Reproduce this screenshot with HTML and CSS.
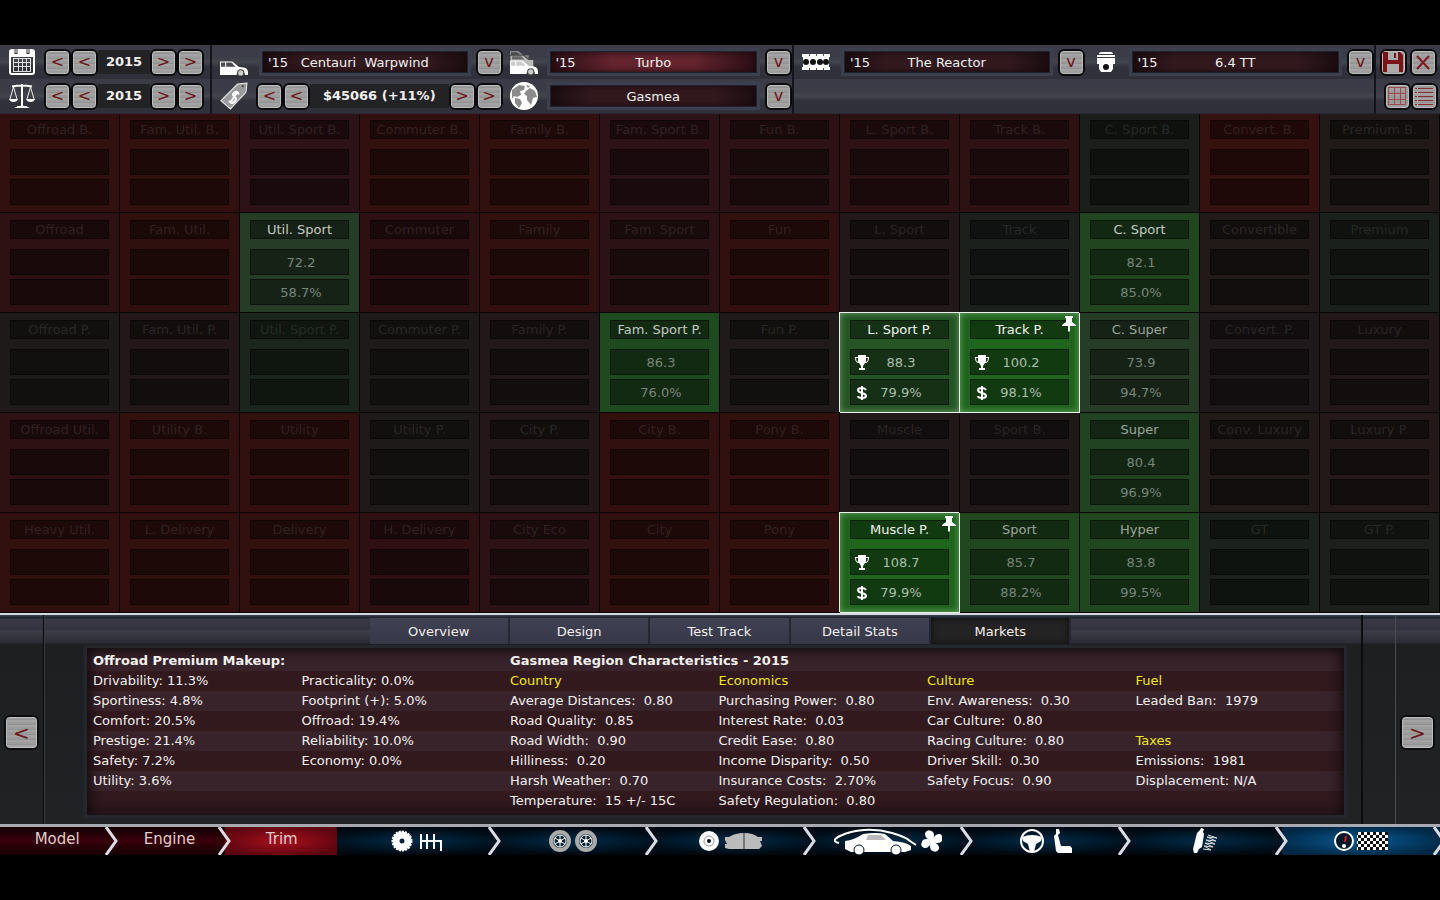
FILE: index.html
```html
<!DOCTYPE html>
<html lang="en">
<head>
    <meta charset="UTF-8">
    <meta name="viewport" content="width=device-width, initial-scale=1.0">
    <title>Markets</title>
    <link rel="stylesheet" href="styles.css">
</head>
<body>

<header class="topbar">
    <div class="section dates">
        <div class="row">
            <svg class="icon" viewBox="0 0 26 26"><rect x="1" y="1" width="24" height="24" rx="2" fill="none" stroke="#fff" stroke-width="2"/><path d="M1 2h24v6H1z" fill="#fff"/><path d="M7 0v5M19 0v5" stroke="#33343c" stroke-width="3"/><path d="M7 0v4M19 0v4" stroke="#fff"/><path d="M4 9.500h18M4 13.500h18M4 17.500h18M4 22.500h18M4.500 9v14M9.500 9v14M13.500 9v14M17.500 9v14M21.500 9v14" stroke="#ddd" stroke-width="1"/></svg>
            <button class="metal">&lt;</button><button class="metal">&lt;</button>
            <b class="value">2015</b>
            <button class="metal">&gt;</button><button class="metal">&gt;</button>
        </div>
        <div class="row">
            <svg class="icon" viewBox="0 0 26 26"><path d="M13 1v22M3 3.500q10-2 20 0M8 24h10" fill="none" stroke="#fff" stroke-width="2"/><path d="M4.500 4L1 16M4.500 4L8 16M21.500 4L18 16M21.500 4L25 16" fill="none" stroke="#eee"/><path d="M0 16h9q-1 3-4.500 3T0 16zM17 16h9q-1 3-4.500 3T17 16zM5 25q8-5 16 0z" fill="#fff"/></svg>
            <button class="metal">&lt;</button><button class="metal">&lt;</button>
            <b class="value">2015</b>
            <button class="metal">&gt;</button><button class="metal">&gt;</button>
        </div>
    </div>

    <div class="section">
        <div class="row">
            <div class="unit">
                <svg class="icon" viewBox="0 0 27 27"><path d="M0 13h12l6 5 6 1q3 1 3 5v2h-3a4 4 0 0 0-8 0H0z" fill="#fff"/><path d="M1 14h4v4H1zM6 14h5l4 4H6z" fill="#4a4b53"/><circle cx="20" cy="24" r="3" fill="#ccc" stroke="#444"/></svg>
                <div class="field"><span>'15</span><select aria-label="Model"><option>Centauri&nbsp; Warpwind</option></select></div>
                <button class="metal">v</button>
            </div>
            <div class="unit">
                <svg class="icon" viewBox="0 0 27 27"><path d="M0 3h8l5 4h5v13H0z" fill="#888"/><path d="M1 4h6l3 3H1z" fill="#4a4b53"/><path d="M0 7h13l5 4h5v12H0z" fill="#bbb" stroke="#444"/><path d="M2 8h9l3 3H2z" fill="#666"/><path d="M0 12h12l6 5 6 1q3 1 3 5v2h-3a4 4 0 0 0-8 0H0z" fill="#fff"/><path d="M1 13h4v4H1zM6 13h5l4 4H6z" fill="#ccc"/><circle cx="20" cy="23" r="3" fill="#ccc" stroke="#444"/></svg>
                <div class="field active"><span>'15</span><select aria-label="Trim"><option>Turbo</option></select></div>
                <button class="metal">v</button>
            </div>
        </div>
        <div class="row">
            <div class="unit price">
                <svg class="icon" viewBox="0 0 27 27"><path d="M1 18L17 2l9-1-1 9L10 26z" fill="#9a9a9c" stroke="#eee"/><circle cx="22" cy="4" r="1" fill="#444"/><path d="M18 12q-1-4-4-2t0 4 0 5-5-1M17 9l-7 11" fill="none" stroke="#fff" stroke-width="2"/></svg>
                <button class="metal">&lt;</button><button class="metal">&lt;</button>
                <b class="value">$45066 (+11%)</b>
                <button class="metal">&gt;</button><button class="metal">&gt;</button>
            </div>
            <div class="unit">
                <svg class="icon" viewBox="0 0 28 28"><circle cx="14" cy="14" r="14" fill="#fff"/><path d="M2 8l7-5 6 1-1 4-4 1 1 4-4 2-3-1-2 3zM5 16l5 1 2 4-3 5-4-5zM16 9l4-3 5 3 2 6-4 1-2 7-4-5v-4l-3-2zM16 3l4 1-2 2z" fill="#8b8b8b"/></svg>
                <div class="field"><select aria-label="Region"><option>Gasmea</option></select></div>
                <button class="metal">v</button>
            </div>
        </div>
    </div>

    <div class="section">
        <div class="row">
            <div class="unit">
                <svg class="icon" viewBox="0 0 28 28"><path d="M1 6h26v16H1z" fill="#fff"/><path d="M0 6h3v3H0zM25 6h3v3h-3zM0 19h3v3H0zM25 19h3v3h-3z" fill="#fff"/><g fill="#111"><circle cx="4" cy="14" r="3"/><circle cx="11" cy="14" r="3"/><circle cx="18" cy="14" r="3"/><circle cx="24" cy="14" r="3"/></g><g fill="#555"><path d="M7 6h1v2H7zM14 6h1v2h-1zM21 6h1v2h-1zM7 20h1v2H7zM14 20h1v2h-1zM21 20h1v2h-1z"/></g></svg>
                <div class="field"><span>'15</span><select aria-label="Engine family"><option>The Reactor</option></select></div>
                <button class="metal">v</button>
            </div>
            <div class="unit">
                <svg class="icon" viewBox="0 0 28 28"><path d="M7 5l2-1h10l2 1v1H7zM5 7h18v2H5zM5 10h18v6h-2v5l-2 3H9l-2-3v-5H5z" fill="#fff"/><circle cx="14" cy="19" r="3" fill="#111"/></svg>
                <div class="field"><span>'15</span><select aria-label="Engine variant"><option>6.4 TT</option></select></div>
                <button class="metal">v</button>
            </div>
        </div>
        <div class="row"></div>
    </div>

    <div class="section tools">
        <div class="row">
            <button class="metal" aria-label="Save"><svg viewBox="0 0 22 22"><path d="M1 1h17l3 3v17H1z" fill="#7c1117"/><path d="M6 1h10v8H6zM5 13h12v8H5z" fill="#aaa"/><path d="M12 2h2v5h-2z" fill="#7c1117"/></svg></button>
            <button class="metal" aria-label="Close"><svg viewBox="0 0 22 22"><path d="M5 5l12 13M17 5L5 18" stroke="#7c1b22" stroke-width="2"/></svg></button>
        </div>
        <div class="row">
            <button class="metal" aria-label="Grid view"><svg viewBox="0 0 22 22"><path d="M2 2.500h18M2 8.500h18M2 14.500h18M2 19.500h18M2.500 2v18M8.500 2v18M14.500 2v18M19.500 2v18" stroke="#9c4a50"/></svg></button>
            <button class="metal" aria-label="List view"><svg viewBox="0 0 22 22"><path d="M2 3.500h18M2 7.500h18M2 11.500h18M2 15.500h18M2 19.500h18" stroke="#8d2a32"/><path d="M4.500 2v19" stroke="#aaa"/></svg></button>
        </div>
    </div>
</header>

<main class="markets" id="markets"></main>

<section class="panel">
    <div class="side"><button class="metal big" aria-label="Previous">&lt;</button></div>
    <div class="center">
        <nav class="tabs">
            <button>Overview</button>
            <button>Design</button>
            <button>Test Track</button>
            <button>Detail Stats</button>
            <button class="current">Markets</button>
        </nav>
        <div class="screen">
            <h2 class="makeup">Offroad Premium Makeup:</h2>
            <h2 class="region">Gasmea Region Characteristics - 2015</h2>
            <ul>
                <li>Drivability: 11.3%</li>
                <li>Sportiness: 4.8%</li>
                <li>Comfort: 20.5%</li>
                <li>Prestige: 21.4%</li>
                <li>Safety: 7.2%</li>
                <li>Utility: 3.6%</li>
            </ul>
            <ul>
                <li>Practicality: 0.0%</li>
                <li>Footprint (+): 5.0%</li>
                <li>Offroad: 19.4%</li>
                <li>Reliability: 10.0%</li>
                <li>Economy: 0.0%</li>
            </ul>
            <ul>
                <li class="title">Country</li>
                <li>Average Distances:&nbsp; 0.80</li>
                <li>Road Quality:&nbsp; 0.85</li>
                <li>Road Width:&nbsp; 0.90</li>
                <li>Hilliness:&nbsp; 0.20</li>
                <li>Harsh Weather:&nbsp; 0.70</li>
                <li>Temperature:&nbsp; 15 +/- 15C</li>
            </ul>
            <ul>
                <li class="title">Economics</li>
                <li>Purchasing Power:&nbsp; 0.80</li>
                <li>Interest Rate:&nbsp; 0.03</li>
                <li>Credit Ease:&nbsp; 0.80</li>
                <li>Income Disparity:&nbsp; 0.50</li>
                <li>Insurance Costs:&nbsp; 2.70%</li>
                <li>Safety Regulation:&nbsp; 0.80</li>
            </ul>
            <ul>
                <li class="title">Culture</li>
                <li>Env. Awareness:&nbsp; 0.30</li>
                <li>Car Culture:&nbsp; 0.80</li>
                <li>Racing Culture:&nbsp; 0.80</li>
                <li>Driver Skill:&nbsp; 0.30</li>
                <li>Safety Focus:&nbsp; 0.90</li>
            </ul>
            <ul>
                <li class="title">Fuel</li>
                <li>Leaded Ban:&nbsp; 1979</li>
                <li></li>
                <li class="title">Taxes</li>
                <li>Emissions:&nbsp; 1981</li>
                <li>Displacement: N/A</li>
            </ul>
        </div>
    </div>
    <div class="strip"></div>
    <div class="side"><button class="metal big" aria-label="Next">&gt;</button></div>
</section>

<nav class="steps">
    <button class="red">Model<svg class="chevron" viewBox="0 0 14 28"><use href="#chev"/></svg></button>
    <button class="red">Engine<svg class="chevron" viewBox="0 0 14 28"><use href="#chev"/></svg></button>
    <button class="red now">Trim</button>
    <button aria-label="Drivetrain">
        <svg width="52" height="26" viewBox="0 0 52 26"><circle cx="12" cy="13" r="6" fill="none" stroke="#fff" stroke-width="7"/><circle cx="12" cy="13" r="9" fill="none" stroke="#fff" stroke-width="3" stroke-dasharray="2 1"/><path d="M31 6v15M37 6v15M44 6v15M31 13h20v10" fill="none" stroke="#fff" stroke-width="2"/></svg>
        <svg class="chevron" viewBox="0 0 14 28"><use href="#chev"/></svg>
    </button>
    <button aria-label="Wheels">
        <svg width="50" height="26" viewBox="0 0 50 26"><g id="wheel"><circle cx="12" cy="13" r="9" fill="#0a2638" stroke="#aaa" stroke-width="4"/><circle cx="12" cy="13" r="6" fill="none" stroke="#fff"/><path d="M12 7v12M7 10l10 6M17 10L7 16" stroke="#fff"/><circle cx="12" cy="13" r="2" fill="#fff"/></g><use href="#wheel" x="26"/></svg>
        <svg class="chevron" viewBox="0 0 14 28"><use href="#chev"/></svg>
    </button>
    <button aria-label="Brakes">
        <svg width="64" height="26" viewBox="0 0 64 26"><circle cx="10" cy="13" r="10" fill="#fff"/><circle cx="10" cy="13" r="5" fill="none" stroke="#999"/><circle cx="10" cy="13" r="2" fill="#012"/><path d="M26 9h4q6-4 15-4t14 4h4v4h-2l2 5-3 3H30l-4-1v-4h2l-2-4z" fill="#bbb"/><path d="M45 5v16" stroke="#333"/></svg>
        <svg class="chevron" viewBox="0 0 14 28"><use href="#chev"/></svg>
    </button>
    <button aria-label="Aerodynamics">
        <svg width="108" height="28" viewBox="0 0 108 28"><path d="M5 16Q-4 14 6 9T30 3t28 3 18 8l6 4" fill="none" stroke="#fff" stroke-width="2"/><path d="M11 14q9-1 18-7 13-2 22 0l8 7q13 1 18 5v4l-6 2H17l-6-3z" fill="#fff"/><path d="M34 8h13l5 5H32z" fill="#bbb"/><g fill="#fff" stroke="#012"><circle cx="25" cy="23" r="5"/><circle cx="62" cy="23" r="5"/></g><g fill="#fff"><path id="blade" d="M98 14q-8-3-7-8 3-5 8-1 2 3 0 9z"/><use href="#blade" transform="rotate(90 98 14)"/><use href="#blade" transform="rotate(180 98 14)"/><use href="#blade" transform="rotate(270 98 14)"/></g></svg>
        <svg class="chevron" viewBox="0 0 14 28"><use href="#chev"/></svg>
    </button>
    <button aria-label="Interior">
        <svg width="52" height="26" viewBox="0 0 52 26"><circle cx="12" cy="13" r="11" fill="none" stroke="#fff" stroke-width="2"/><path d="M2 9q10-4 20 0l-1 4-5 3-2 8h-4l-2-8-5-3z" fill="#fff"/><path d="M36 1h3l1 4-2 2 3 11h9l2 2v5H38l-2-2-2-15 2-2z" fill="#fff"/></svg>
        <svg class="chevron" viewBox="0 0 14 28"><use href="#chev"/></svg>
    </button>
    <button aria-label="Suspension">
        <svg width="28" height="26" viewBox="0 0 28 26"><path d="M11 0l3 1-1 3 1 2-2 13-3 2-2 4H4l-1-4 4-16 3-3z" fill="#fff"/><path d="M18 7l9 3-10-1 9 4-10-1 9 4-10-1 8 4-9-1 7 4-8-1" fill="none" stroke="#ddd"/></svg>
        <svg class="chevron" viewBox="0 0 14 28"><use href="#chev"/></svg>
    </button>
    <button class="lit" aria-label="Testing">
        <svg width="54" height="24" viewBox="0 0 54 24"><defs><pattern id="flag" width="6" height="6" patternUnits="userSpaceOnUse"><path d="M0 0h6v6H0z" fill="#fff"/><path d="M0 0h3v3H0zM3 3h3v3H3z" fill="#111"/></pattern></defs><circle cx="10" cy="12" r="9" fill="#02192c" stroke="#fff" stroke-width="2"/><path d="M12 7l-1 6" stroke="#c22" stroke-width="2"/><circle cx="10" cy="17" r="2" fill="#fff"/><rect x="23" y="3" width="31" height="18" fill="url(#flag)"/></svg>
        <svg class="chevron" viewBox="0 0 14 28"><use href="#chev"/></svg>
    </button>
</nav>

<svg class="defs" viewBox="0 0 40 40">
    <defs>
        <path id="chev" d="M1 0l10 14L1 28" fill="none" stroke="#dcdce6" stroke-width="3"/>
        <path id="trophy" d="M3 0h8v2h3q0 6-4 6l-2 3v2h2v2H4v-2h2v-2L4 8Q0 8 0 2h3zM1 3q0 3 2 4V3zM13 3h-2v4q2-1 2-4z" fill="#fff"/>
        <path id="pin" d="M3 0h8v2h-1v4l4 3v1H8v5L7 16l-1-1v-5H0V9l4-3V2H3z" fill="#fff"/>
        <path id="dollar" d="M11 5Q10 3 7 3 3 3 3 5t4 3 4 3-4 2-4-2M7 1v14" fill="none" stroke="#fff" stroke-width="2"/>
    </defs>
</svg>

<script>
// name, cell colour, [competitiveness, affordability], options
const markets = [
    ["Offroad B.", "#31100f"], ["Fam. Util. B.", "#31100f"], ["Util. Sport B.", "#2d1217"], ["Commuter B.", "#32100f"],
    ["Family B.", "#31100f"], ["Fam. Sport B.", "#2d1217"], ["Fun B.", "#2c1214"], ["L. Sport B.", "#2e1213"],
    ["Track B.", "#2e1213"], ["C. Sport B.", "#1b1e1b"], ["Convert. B.", "#35110f"], ["Premium B.", "#221919"],

    ["Offroad", "#2e1113"], ["Fam. Util.", "#30100f"], ["Util. Sport", "#263c26", [72.2, 58.7]], ["Commuter", "#2e1012"],
    ["Family", "#31100f"], ["Fam. Sport", "#2c1214"], ["Fun", "#31100f"], ["L. Sport", "#221819"],
    ["Track", "#1b201c"], ["C. Sport", "#21451f", [82.1, 85.0]], ["Convertible", "#221919"], ["Premium", "#1a201b"],

    ["Offroad P.", "#1f1a1a"], ["Fam. Util. P.", "#241719"], ["Util. Sport P.", "#1a251b"], ["Commuter P.", "#1f1a1a"],
    ["Family P.", "#221819"], ["Fam. Sport P.", "#1f491e", [86.3, 76.0]], ["Fun P.", "#201a1a"], ["L. Sport P.", "#255425", [88.3, 79.9], "selected"],
    ["Track P.", "#1f651d", [100.2, 98.1], "selected pinned"], ["C. Super", "#263c26", [73.9, 94.7], "dim"], ["Convert. P.", "#1f191b"], ["Luxury", "#221819"],

    ["Offroad Util.", "#2e1113"], ["Utility B.", "#31100f"], ["Utility", "#31100f"], ["Utility P.", "#1f1a1a"],
    ["City P.", "#241719"], ["City B.", "#31100f"], ["Pony B.", "#31100f"], ["Muscle", "#201819"],
    ["Sport B.", "#201819"], ["Super", "#214322", [80.4, 96.9], "dim"], ["Conv. Luxury", "#221919"], ["Luxury P.", "#241819"],

    ["Heavy Util.", "#31100f"], ["L. Delivery", "#31100f"], ["Delivery", "#31100f"], ["H. Delivery", "#2e1012"],
    ["City Eco", "#2c1214"], ["City", "#31100f"], ["Pony", "#31100f"], ["Muscle P.", "#1f651d", [108.7, 79.9], "selected pinned"],
    ["Sport", "#20471f", [85.7, 88.2], "dim"], ["Hyper", "#20471f", [83.8, 99.5], "dim"], ["GT", "#1b211c"], ["GT P.", "#1d1f1c"]
];

function icon(id, show) {
    return show ? `<svg width="14" height="16" viewBox="0 0 14 16"><use href="#${id}"/></svg>` : "";
}

document.getElementById("markets").innerHTML = markets.map(([name, color, score, flags = ""]) => {
    const selected = flags.includes("selected");
    return `<div class="market ${score ? "open" : ""} ${flags}" style="background-color: ${color}">
        <div class="name">${name}</div>
        <div class="score"><i>${icon("trophy", selected)}</i>${score ? score[0].toFixed(1) : ""}</div>
        <div class="score"><i>${icon("dollar", selected)}</i>${score ? score[1].toFixed(1) + "%" : ""}</div>
        ${flags.includes("pinned") ? '<svg class="pin" viewBox="0 0 14 16"><use href="#pin"/></svg>' : ""}
    </div>`;
}).join("");
</script>

</body>
</html>
```
FILE: styles.css
```css
* {
    box-sizing: border-box;
}

body {
    margin: 0;
    min-height: 100vh;
    display: flex;
    flex-direction: column;
    justify-content: center;
    background: #000;
    color: #f4f0f0;
    font-family: "DejaVu Sans", Verdana, sans-serif;
    font-size: 13px;
    overflow-x: hidden;
}

button,
select {
    font: inherit;
    color: inherit;
    border: 0;
    padding: 0;
    cursor: pointer;
}

.defs {
    position: absolute;
    width: 0;
    height: 0;
}

/* top bar */
.topbar {
    display: grid;
    grid-template-columns: 212px 1fr 1fr 64px;
}

.section {
    border-right: 2px solid #14151c;
}

.tools {
    border-right: 0;
}

.row {
    display: flex;
    align-items: center;
    height: 34px;
    background: linear-gradient(#3a3b47, #3b3c46 35%, #43454d 50%, #30313a 65%, #2f3039);
}

.row + .row {
    height: 35px;
    border-bottom: 1px solid #292a33;
}

.dates .row {
    padding: 0 6px 0 9px;
}

.icon {
    width: 28px;
    height: 28px;
    flex: none;
}

.dates .icon {
    width: 26px;
    margin-right: 9px;
}

.unit {
    display: flex;
    align-items: center;
    flex: 1;
    padding-left: 8px;
}

.unit .icon {
    margin-right: 14px;
}

.unit + .unit {
    padding-left: 7px;
}

.unit + .unit .icon {
    margin-right: 12px;
}

.price .icon {
    margin-right: 8px;
}

.value {
    flex: 1;
    height: 24px;
    line-height: 24px;
    text-align: center;
    background: #232325;
}

.field {
    flex: 1;
    min-width: 0;
    height: 22px;
    display: grid;
    align-items: center;
    margin-right: 8px;
    border: 1px solid #20212a;
    background: linear-gradient(90deg, #1b0c10, #32191e 20%, #32191e 80%, #1b0c10);
    box-shadow: 0 0 0 3px #3c3f4d, inset 0 0 6px #170a0d;
}

.field.active {
    background: linear-gradient(90deg, #2a0d13, #63242e 30%, #63242e 70%, #2a0d13);
}

.field span,
.field select {
    grid-area: 1 / 1;
}

.field span {
    padding-left: 5px;
}

.field select {
    width: 100%;
    appearance: none;
    background: none;
    text-align: center;
    text-align-last: center;
}

.metal {
    flex: none;
    width: 27px;
    height: 27px;
    border: 2px solid #0b0b0d;
    border-radius: 6px;
    background: repeating-linear-gradient(#9c9c9c 0 2px, #939393 2px 3px, #a3a3a3 3px 5px);
    box-shadow: inset 0 0 0 1px #bcbcbc;
    color: #6c1418;
    font-size: 16px;
    line-height: 20px;
}

.metal svg {
    display: block;
    width: 22px;
    height: 22px;
}

.metal.big {
    width: 35px;
    height: 35px;
    font-size: 20px;
}

.tools .row {
    justify-content: center;
}

.tools .row:first-child {
    gap: 3px;
}

.tools .row:last-child {
    justify-content: flex-end;
    padding-right: 2px;
}

/* market grid */
.markets {
    display: grid;
    grid-template-columns: repeat(12, 1fr);
}

.market {
    position: relative;
    padding: 7px 10px;
    border-right: 1px solid #080505;
    border-bottom: 1px solid #080505;
    color: rgba(255, 255, 255, 0.11);
    text-align: center;
}

.market:nth-child(-n+12) {
    padding-top: 6px;
}

.name,
.score {
    border: 1px solid rgba(0, 0, 0, 0.4);
    background: rgba(0, 0, 0, 0.42);
}

.name {
    height: 19px;
    line-height: 17px;
    margin-bottom: 10px;
    white-space: nowrap;
}

.score {
    height: 26px;
    display: grid;
    grid-template-columns: 21px 1fr 18px;
    align-items: center;
    padding-top: 1px;
}

.score + .score {
    margin-top: 4px;
}

.score i {
    display: flex;
    justify-content: center;
}

.open {
    color: #77867a;
}

.open .name {
    color: #c2cbc2;
}

.dim .name {
    color: #9aa69b;
}

.market.selected {
    z-index: 1;
    border-color: #e8f0e8;
    box-shadow: -1px -1px 0 #e8f0e8, inset 0 0 6px rgba(160, 210, 160, 0.6);
    color: #a9bfa9;
}

.selected .name {
    color: #eef5ee;
}

.pin {
    position: absolute;
    top: 3px;
    right: 3px;
    width: 14px;
    height: 16px;
}

/* bottom panel */
.panel {
    display: flex;
    border-top: 2px solid #d5d8de;
    border-bottom: 3px solid #a9a9b2;
    background: linear-gradient(#3a4654, #1c1e28 3px, #3a3a46 4px, #31323d 14px, #3b3c46 16px, #2a2b34 28px, #1d1f21 29px, #202224);
}

.side {
    width: 44px;
    padding: 100px 4px 0;
    border-right: 1px solid #08090a;
    box-shadow: 1px 0 0 #3a3c41;
}

.side:last-child {
    width: 45px;
    padding-left: 5px;
    border-right: 0;
    box-shadow: inset 1px 0 0 #4a4c52;
}

.strip {
    width: 34px;
    border-left: 2px solid #0b0c0e;
}

.center {
    flex: 1;
    padding-left: 40px;
    padding-right: 14px;
}

.tabs {
    display: grid;
    grid-template-columns: repeat(5, 1fr);
    width: 702px;
    margin: 3px auto 0;
    position: relative;
    left: 5px;
}

.tabs button {
    height: 26px;
    border-right: 2px solid #262733;
    background: linear-gradient(#404153, #363747);
}

.tabs .current {
    background: #232323;
    box-shadow: inset 0 0 6px #0c0c0c;
}

.screen {
    display: grid;
    grid-template-columns: repeat(6, 1fr);
    grid-template-rows: 20px 140px;
    margin: 1px 0 6px;
    padding: 3px 0 4px 6px;
    border: 3px solid #24282d;
    background: repeating-linear-gradient(#38232a 0 20px, #31191e 20px 40px) 0 3px;
    box-shadow: inset 0 0 12px 3px #120a0c;
    line-height: 20px;
}

.screen h2 {
    margin: 0;
    font-size: 13px;
    line-height: 20px;
}

.makeup {
    grid-column: span 2;
}

.region {
    grid-column: span 4;
}

.screen ul {
    margin: 0;
    padding: 0;
    list-style: none;
    white-space: nowrap;
}

.screen li {
    height: 20px;
}

.title {
    color: #f0e818;
}

/* design steps */
.steps {
    display: flex;
    overflow: hidden;
}

.steps button {
    position: relative;
    flex: 1;
    height: 28px;
    display: flex;
    align-items: center;
    justify-content: center;
    background: radial-gradient(ellipse at center, rgba(0, 62, 105, 0.5), transparent 70%), linear-gradient(#00070d, #001523 50%, #00070d);
}

.steps .red {
    flex: none;
    width: 7.8%;
    padding: 0 0 4px 2px;
    color: #e0cccc;
    font-size: 15px;
    background: linear-gradient(#120003, #38000a 50%, #120003);
}

.steps .now {
    background: radial-gradient(ellipse at center, #a8101b, #5c0510 80%);
}

.steps .lit {
    background: radial-gradient(ellipse at center, #0a5a94, #002743 80%);
}

.chevron {
    position: absolute;
    z-index: 1;
    top: 0;
    right: -7px;
    width: 14px;
    height: 28px;
}
```
